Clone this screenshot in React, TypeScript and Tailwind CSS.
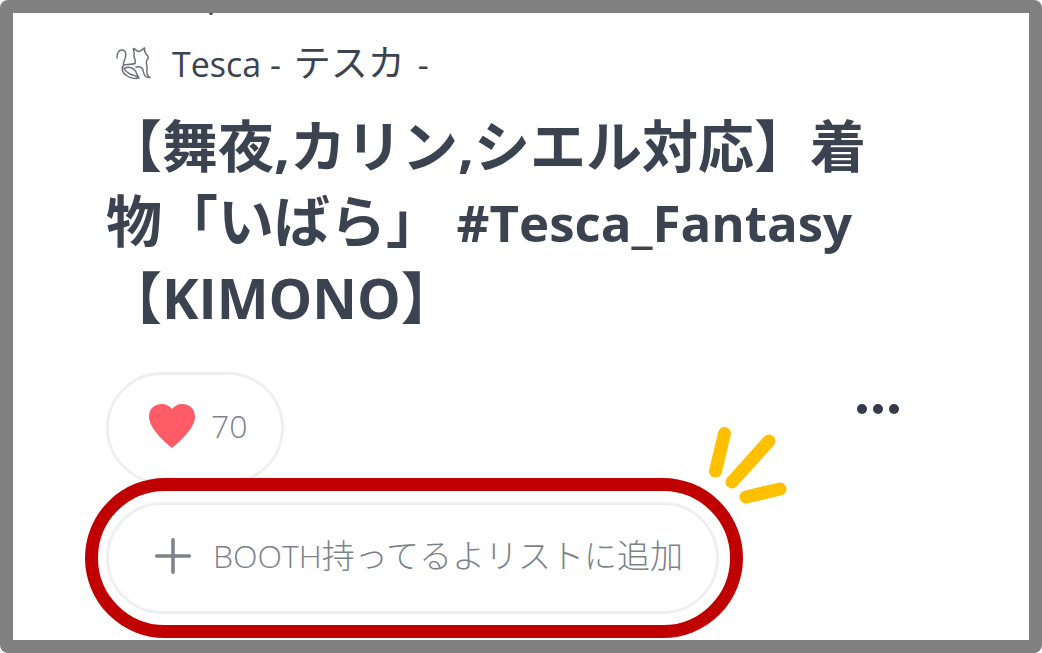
import { Plus } from 'lucide-react';

const LIKES = 70;

const CatLogo = () => (
  <svg viewBox="0 0 36 34" className="w-9 h-[34px] shrink-0" fill="none" stroke="#6b7078" strokeWidth="1.5" strokeLinecap="round" strokeLinejoin="round" aria-hidden="true">
    <path d="M1 12C1 7 2 4 6 4C9.500 4 10.500 7 9.500 11C9 14 6.500 17 7.500 19C10 18 15 19 19 17.500" />
    <path d="M19 17.500C20.500 14 17.500 12 18 9C19 6 17 5 17.500 2.500C20 3 20.500 5.500 22.500 5.500C25 5.500 26 3.500 28.500 2C28 5 29 6 30 8C33 11 33 12 31 14C29 16 31.500 19 31 23C30.500 27 31 30 34 31.500C30 32 28 29 27.500 26C27 22 25 20 20 21" />
    <path d="M7.500 19C5 23 6.500 27 10 29C13 31.500 18 33 23 32C21 29.500 18 30 15 28.500C12 27 9 24.500 8 22.500C13 20 18 22 19.500 25C20.500 27 21 29 23 32" />
  </svg>
);

const Heart = () => (
  <svg viewBox="0 0 46 44" className="w-[46px] h-11" fill="#ff5c67" aria-hidden="true">
    <path d="M23 44C19 41 0 25 0 13C0 5 5 0 13 0C17 0 21 2 23 5C25 2 29 0 33 0C41 0 46 5 46 13C46 25 27 41 23 44Z" />
  </svg>
);

const Sparks = () => (
  <svg viewBox="0 0 80 80" className="absolute -top-[77px] left-[602px] w-20 h-20 pointer-events-none" stroke="#ffc000" strokeWidth="13" strokeLinecap="round" aria-hidden="true">
    <path d="M16.500 8.500L7.500 46M61 16L24 57M72 64L38 72" />
  </svg>
);

const App = () => {
  return (
    <div className="min-h-screen bg-white">
      <main className="min-h-screen overflow-hidden rounded-lg border-[13px] border-[#808080] bg-white pl-[93px] pr-[130px] font-['Open_Sans','Noto_Sans_CJK_JP',sans-serif] text-[#3b4350]">
        {/* Lower edge of the scrolled-off line */}
        <div className="ml-[103px] h-0.5 w-1 rounded-b bg-[#3b4350]" />

        <a href="#shop" className="mt-6 ml-2.5 flex h-12 items-center gap-5 text-[34px] leading-[48px]" lang="ja">
          <CatLogo />
          <span>Tesca - <span className="mx-1 text-[37px]">テスカ</span> -</span>
        </a>

        <h1 className="mt-[21px] text-[56px] font-bold leading-[75px]" lang="ja">
          <span>【舞夜,カリン,シエル対応】着</span>
          <span>物「いばら」 </span>
          <span className="text-[51px]">#Tesca_Fantasy</span>{' '}
          <span>【<span className="text-[55px]">KIMONO</span>】</span>
        </h1>

        <div className="mt-[37px] flex items-start justify-between">
          <button type="button" className="flex h-28 w-[178px] items-center gap-4 rounded-full border-[3px] border-[#eeeff1] pl-10 pb-1 text-[32px] font-light text-[#7c828b]">
            <Heart />
            {LIKES}
          </button>
          <button type="button" aria-label="メニュー" className="mt-8 flex gap-1.5">
            <span className="h-2.5 w-2.5 rounded-full bg-[#323c4b]" />
            <span className="h-2.5 w-2.5 rounded-full bg-[#323c4b]" />
            <span className="h-2.5 w-2.5 rounded-full bg-[#323c4b]" />
          </button>
        </div>

        <div className="relative mt-[18px] w-fit">
          <button type="button" className="flex h-28 w-[613px] items-center gap-3 rounded-full border-[3px] border-[#eeeff1] pl-9 pb-1 text-[32px] font-light text-[#7c828b] whitespace-nowrap" lang="ja">
            <Plus className="h-14 w-14 shrink-0" strokeWidth={1.5} />
            <span>BOOTH<span className="text-[33px]">持ってるよリストに追加</span></span>
          </button>
          {/* Highlight ring */}
          <div className="pointer-events-none absolute -inset-6 -left-[21px] rounded-full border-[13px] border-[#c00000]" />
          <Sparks />
        </div>
      </main>
    </div>
  );
};

export default App;
